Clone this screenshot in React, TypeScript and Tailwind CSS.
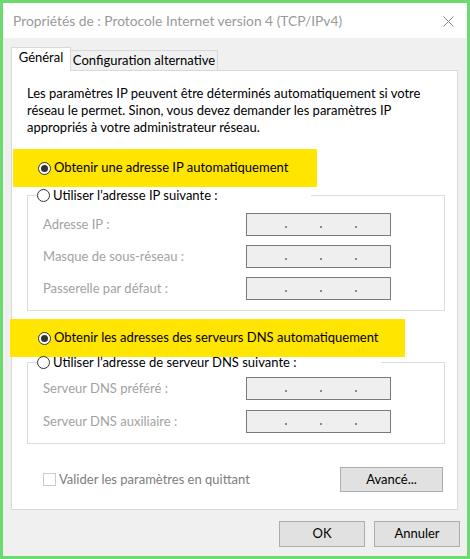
import React from 'react'

const Radio = ({ checked }: { checked?: boolean }) => (
    <span className="w-[13px] h-[13px] shrink-0 rounded-full border border-[#333333] bg-white flex items-center justify-center">
        {checked && <span className="w-[7px] h-[7px] rounded-full bg-[#333333]" />}
    </span>
)

const IpBox = () => (
    <div className="w-[145px] h-[23px] border border-[#7a7a7a] bg-[#efefef] flex items-end pl-[38px] gap-[33px] pb-[7px]">
        <span className="w-[2px] h-[2px] bg-[#8a8a8a]" />
        <span className="w-[2px] h-[2px] bg-[#8a8a8a]" />
        <span className="w-[2px] h-[2px] bg-[#8a8a8a]" />
    </div>
)

const Field = ({ label }: { label: string }) => (
    <div className="flex items-center justify-between pl-[15px] pr-[53px]">
        <span className="text-[#a2a2a2]">{label}</span>
        <IpBox />
    </div>
)

const App = () => {
    return (
        <div className="w-[470px] h-[559px] border-[3px] border-[#6cdb6f] bg-[#f0f0f0] flex flex-col font-['Lato',sans-serif] text-[13px] text-black">
            {/* title bar */}
            <div className="h-[35px] bg-white flex items-center justify-between pl-[10px] pr-[13px] shrink-0">
                <span className="text-[13.8px] text-[#999999] pt-[2px] whitespace-nowrap">Propriétés de : Protocole Internet version 4 (TCP/IPv4)</span>
                <svg width="11" height="11" viewBox="0 0 11 11" className="mt-[2px]">
                    <path d="M0.5 0.5 L10.5 10.5 M10.5 0.5 L0.5 10.5" stroke="#8a8a8a" strokeWidth="1" />
                </svg>
            </div>

            <div className="flex-1 flex flex-col pl-[8px] pr-[9px] pt-[9px]">
                {/* tabs */}
                <div className="flex items-end h-[23px] whitespace-nowrap">
                    <div className="relative z-10 w-[60px] h-[24px] -mb-px bg-white border border-b-0 border-[#d9d9d9] flex items-center justify-center pb-[3px]">
                        Général
                    </div>
                    <div className="w-[147px] h-[20px] border border-l-0 border-b-0 border-[#d9d9d9] flex items-center justify-center">
                        Configuration alternative
                    </div>
                </div>

                {/* panel */}
                <div className="h-[440px] bg-white border border-[#d9d9d9] flex flex-col whitespace-nowrap">
                    <p className="pl-[15px] pt-[14px] leading-[17px]">
                        Les paramètres IP peuvent être déterminés automatiquement si votre<br />
                        réseau le permet. Sinon, vous devez demander les paramètres IP<br />
                        appropriés à votre administrateur réseau.
                    </p>

                    <div className="ml-[1px] mt-[13px] w-[304px] h-[38px] bg-[#ffe500] flex items-center gap-[3px] pl-[25px]">
                        <Radio checked />
                        <span>Obtenir une adresse IP automatiquement</span>
                    </div>

                    <fieldset className="ml-[15px] w-[418px] border border-[#dcdcdc] pt-[9px] pb-[10px] flex flex-col gap-[9px]">
                        <legend className="ml-[9px] w-[274px] h-[17px] flex items-center gap-[3px]">
                            <Radio />
                            <span>Utiliser l’adresse IP suivante :</span>
                        </legend>
                        <Field label="Adresse IP :" />
                        <Field label="Masque de sous-réseau :" />
                        <Field label="Passerelle par défaut :" />
                    </fieldset>

                    <div className="relative z-10 -ml-[2px] mt-[8px] w-[395px] h-[38px] bg-[#ffe500] flex items-center gap-[3px] pl-[28px]">
                        <Radio checked />
                        <span>Obtenir les adresses des serveurs DNS automatiquement</span>
                    </div>

                    <fieldset className="relative z-20 -mt-[3px] ml-[15px] w-[418px] border border-[#dcdcdc] pt-[6px] pb-[10px] flex flex-col gap-[10px]">
                        <legend className="ml-[9px] w-[344px] h-[17px] flex items-center gap-[3px]">
                            <Radio />
                            <span>Utiliser l’adresse de serveur DNS suivante :</span>
                        </legend>
                        <Field label="Serveur DNS préféré :" />
                        <Field label="Serveur DNS auxiliaire :" />
                    </fieldset>

                    <div className="flex items-center justify-between pl-[31px] pr-[14px] mt-[23px]">
                        <div className="flex items-center gap-[3px]">
                            <span className="w-[13px] h-[13px] border border-[#cccccc] bg-white" />
                            <span className="text-[#7d7d7d]">Valider les paramètres en quittant</span>
                        </div>
                        <button className="w-[103px] h-[25px] bg-[#e1e1e1] border border-[#adadad]">Avancé...</button>
                    </div>
                </div>

                {/* dialog buttons */}
                <div className="flex justify-end gap-[9px] mt-[11px] -mr-[2px]">
                    <button className="w-[86px] h-[26px] bg-[#e1e1e1] border border-[#adadad]">OK</button>
                    <button className="w-[86px] h-[26px] bg-[#e1e1e1] border border-[#adadad]">Annuler</button>
                </div>
            </div>
        </div>
    )
}

export default App
